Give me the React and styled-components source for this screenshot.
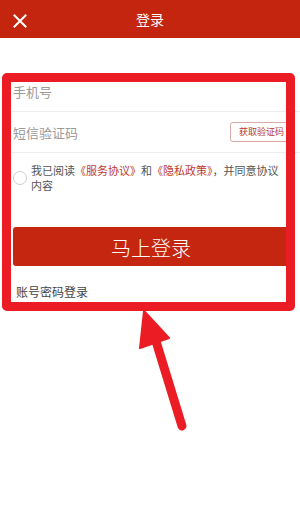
import React from "react";
import styled, { createGlobalStyle } from "styled-components";

const Global = createGlobalStyle`
  html, body { margin: 0; padding: 0; background: #fff; }
  body { font-family: "Noto Sans CJK SC", "Noto Sans", sans-serif; }
  * { box-sizing: border-box; }
`;

const Page = styled.div`
  position: relative;
  width: 300px;
  height: 514px;
  overflow: hidden;
  background: #fff;
`;

const Header = styled.header`
  height: 38px;
  background: #c4250e;
  display: flex;
  align-items: center;
  justify-content: center;
  position: relative;
  color: #fff;
`;

const Title = styled.h1`
  margin: 0;
  font-size: 14px;
  font-weight: 400;
  line-height: 38px;
`;

const CloseBtn = styled.button`
  position: absolute;
  left: 11px;
  top: 12px;
  width: 18px;
  height: 18px;
  padding: 0;
  border: 0;
  background: transparent;
  display: flex;
  align-items: center;
  justify-content: center;
`;

const Form = styled.div`
  padding: 34px 0 0 12px;
`;

const Field = styled.div`
  height: ${(p) => p.$h || 40}px;
  display: flex;
  align-items: center;
  justify-content: space-between;
  border-bottom: 1px solid #ececec;
  padding: 0 7px 0 1px;
`;

const Placeholder = styled.span`
  font-size: 13px;
  color: #9a9a9a;
`;

const CodeButton = styled.button`
  height: 20px;
  padding: 0 8px;
  border: 1px solid #dcaaa5;
  border-radius: 3px;
  background: #fff;
  color: #b73a2b;
  font-family: inherit;
  font-size: 9px;
  line-height: 18px;
`;

const Agree = styled.div`
  display: flex;
  align-items: center;
  padding: 10px 18px 0 1px;
  gap: 4px;
`;

const Radio = styled.span`
  flex: none;
  width: 14px;
  height: 14px;
  border: 1px solid #cfcfcf;
  border-radius: 50%;
`;

const AgreeText = styled.p`
  margin: 0;
  font-size: 11px;
  line-height: 15px;
  color: #555;
`;

const Link = styled.span`
  color: #c0392b;
`;

const LoginButton = styled.button`
  display: block;
  width: calc(100% - 12px);
  margin: 34px 0 0 1px;
  height: 39px;
  border: 0;
  border-radius: 3px;
  background: #c4260f;
  color: #fff;
  font-family: inherit;
  font-size: 20px;
  font-weight: 300;
  line-height: 39px;
`;

const AltLogin = styled.div`
  margin: 18px 0 0 4px;
  font-size: 12px;
  line-height: 16px;
  color: #444;
`;

const Highlight = styled.div`
  position: absolute;
  left: 2px;
  top: 73px;
  width: 293px;
  height: 238px;
  border: 9px solid #ec1c24;
  border-radius: 5px;
  pointer-events: none;
`;

const Arrow = styled.svg`
  position: absolute;
  left: 0;
  top: 0;
  pointer-events: none;
`;

export default function App() {
  return (
    <Page>
      <Global />
      <Header>
        <CloseBtn aria-label="关闭">
          <svg width="14" height="14" viewBox="0 0 14 14">
            <path d="M1.5 1.5 L12.5 12.5 M12.5 1.5 L1.5 12.5" stroke="#fff" strokeWidth="2" strokeLinecap="square" />
          </svg>
        </CloseBtn>
        <Title>登录</Title>
      </Header>
      <Form>
        <Field>
          <Placeholder>手机号</Placeholder>
        </Field>
        <Field $h={41}>
          <Placeholder>短信验证码</Placeholder>
          <CodeButton>获取验证码</CodeButton>
        </Field>
        <Agree>
          <Radio />
          <AgreeText>
            我已阅读<Link>《服务协议》</Link>和<Link>《隐私政策》</Link>，并同意协议内容
          </AgreeText>
        </Agree>
        <LoginButton>马上登录</LoginButton>
        <AltLogin>账号密码登录</AltLogin>
      </Form>
      <Highlight />
      <Arrow width="300" height="514" viewBox="0 0 300 514">
        <line x1="182" y1="426" x2="155" y2="338" stroke="#ec1c24" strokeWidth="9" strokeLinecap="round" />
        <polygon points="144,311 140,348 169,338" fill="#ec1c24" stroke="#ec1c24" strokeWidth="2" strokeLinejoin="round" />
      </Arrow>
    </Page>
  );
}
